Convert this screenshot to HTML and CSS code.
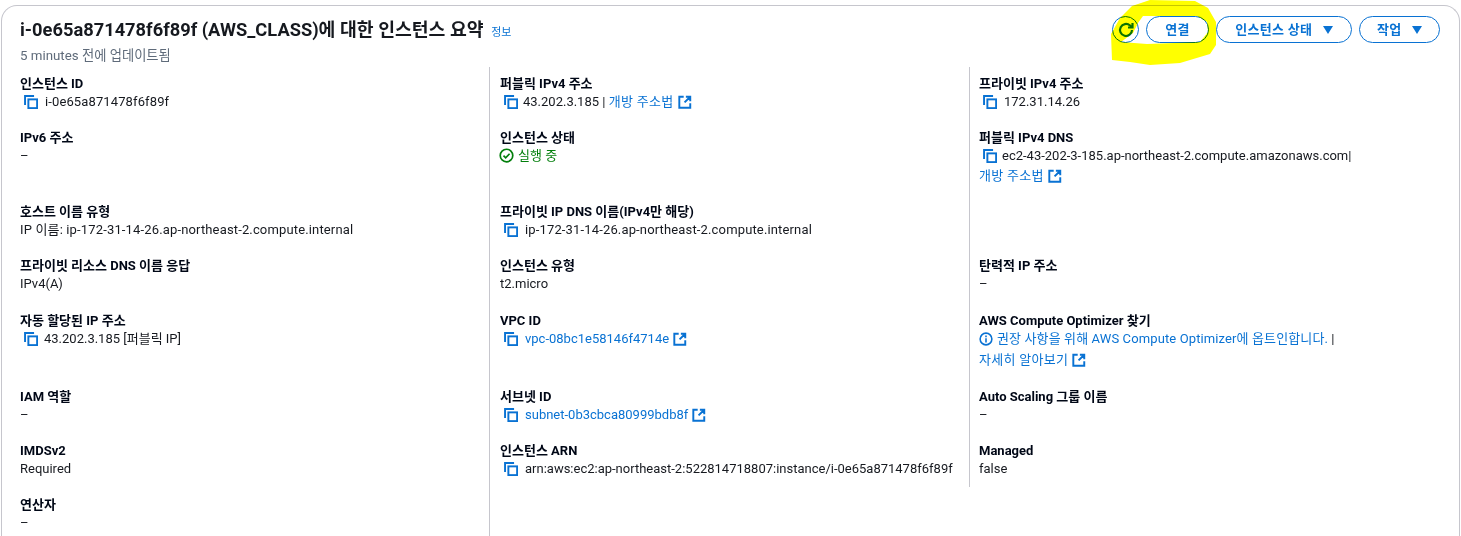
FILE: index.html
```html
<!DOCTYPE html>
<html lang="ko">
<head>
  <meta charset="UTF-8">
  <meta name="viewport" content="width=device-width, initial-scale=1.0">
  <title>인스턴스 요약</title>
  <link rel="stylesheet" href="styles.css">
</head>
<body>
  <!-- Shared icons -->
  <svg class="icon-defs" xmlns="http://www.w3.org/2000/svg">
    <symbol id="copy" viewBox="0 0 16 16">
      <path d="M1.2 11.5V1.2H11.5" fill="none" stroke="currentColor" stroke-width="2.2"></path>
      <rect x="5" y="5" width="10" height="10" fill="none" stroke="currentColor" stroke-width="2.2"></rect>
    </symbol>
    <symbol id="external" viewBox="0 0 16 16">
      <path d="M6.5 2H1.5v12.5H14V9.5M9 2h5v5M14 2L7.5 8.5" fill="none" stroke="currentColor" stroke-width="2.2"></path>
    </symbol>
  </svg>

  <div class="card">
    <header class="card-header">
      <div>
        <h1>i-0e65a871478f6f89f (AWS_CLASS)에 대한 인스턴스 요약 <a class="info-link">정보</a></h1>
        <p class="updated">5 minutes 전에 업데이트됨</p>
      </div>
      <div class="actions">
        <button class="btn btn-icon">
          <svg viewBox="0 0 16 16" class="refresh">
            <path d="M14 8a6 6 0 1 1-2-4.5L14 5" fill="none" stroke="currentColor" stroke-width="2.2"></path>
            <path d="M14.5 1v4.5H10" fill="none" stroke="currentColor" stroke-width="2.2"></path>
          </svg>
        </button>
        <button class="btn btn-connect">연결</button>
        <button class="btn btn-state">인스턴스 상태 <span class="caret"></span></button>
        <button class="btn btn-action">작업 <span class="caret"></span></button>
      </div>
    </header>

    <div class="columns">
      <div class="col">
        <div class="field">
          <div class="label">인스턴스 ID</div>
          <div class="value copy-wide"><svg class="ico-copy"><use href="#copy"></use></svg><span class="stretch-sm">i-0e65a871478f6f89f</span></div>
        </div>
        <div class="field">
          <div class="label">IPv6 주소</div>
          <div class="value">–</div>
        </div>
        <div class="field">
          <div class="label">호스트 이름 유형</div>
          <div class="value stretch">IP 이름: ip-172-31-14-26.ap-northeast-2.compute.internal</div>
        </div>
        <div class="field">
          <div class="label">프라이빗 리소스 DNS 이름 응답</div>
          <div class="value">IPv4(A)</div>
        </div>
        <div class="field">
          <div class="label">자동 할당된 IP 주소</div>
          <div class="value copy-near"><svg class="ico-copy"><use href="#copy"></use></svg>43.202.3.185 [퍼블릭 IP]</div>
        </div>
        <div class="field">
          <div class="label">IAM 역할</div>
          <div class="value">–</div>
        </div>
        <div class="field">
          <div class="label">IMDSv2</div>
          <div class="value">Required</div>
        </div>
        <div class="field">
          <div class="label">연산자</div>
          <div class="value">–</div>
        </div>
      </div>

      <div class="col col-divided">
        <div class="field">
          <div class="label">퍼블릭 IPv4 주소</div>
          <div class="value copy-tight"><svg class="ico-copy"><use href="#copy"></use></svg>43.202.3.185 | <a class="link link-kr">개방 주소법<svg class="ico-ext"><use href="#external"></use></svg></a></div>
        </div>
        <div class="field">
          <div class="label">인스턴스 상태</div>
          <div class="value status">
            <svg viewBox="0 0 16 16" class="ico-status">
              <circle cx="8" cy="8" r="6.7" fill="none" stroke="currentColor" stroke-width="1.8"></circle>
              <path d="M4.8 8.2l2.3 2.3 4.2-4.4" fill="none" stroke="currentColor" stroke-width="1.8"></path>
            </svg>실행 중
          </div>
        </div>
        <div class="field">
          <div class="label">프라이빗 IP DNS 이름(IPv4만 해당)</div>
          <div class="value copy-wide"><svg class="ico-copy"><use href="#copy"></use></svg><span class="stretch">ip-172-31-14-26.ap-northeast-2.compute.internal</span></div>
        </div>
        <div class="field">
          <div class="label">인스턴스 유형</div>
          <div class="value">t2.micro</div>
        </div>
        <div class="field">
          <div class="label">VPC ID</div>
          <div class="value copy-wide"><svg class="ico-copy"><use href="#copy"></use></svg><a class="link">vpc-08bc1e58146f4714e<svg class="ico-ext"><use href="#external"></use></svg></a></div>
        </div>
        <div class="field">
          <div class="label">서브넷 ID</div>
          <div class="value copy-wide"><svg class="ico-copy"><use href="#copy"></use></svg><a class="link">subnet-0b3cbca80999bdb8f<svg class="ico-ext"><use href="#external"></use></svg></a></div>
        </div>
        <div class="field">
          <div class="label">인스턴스 ARN</div>
          <div class="value copy-wide"><svg class="ico-copy"><use href="#copy"></use></svg>arn:aws:ec2:ap-northeast-2:522814718807:instance/i-0e65a871478f6f89f</div>
        </div>
      </div>

      <div class="col col-divided col-last">
        <div class="field">
          <div class="label">프라이빗 IPv4 주소</div>
          <div class="value copy-wide"><svg class="ico-copy"><use href="#copy"></use></svg>172.31.14.26</div>
        </div>
        <div class="field">
          <div class="label">퍼블릭 IPv4 DNS</div>
          <div class="value copy-tight"><svg class="ico-copy"><use href="#copy"></use></svg>ec2-43-202-3-185.ap-northeast-2.compute.amazonaws.com|</div>
          <div class="value second-line"><a class="link link-kr">개방 주소법<svg class="ico-ext"><use href="#external"></use></svg></a></div>
        </div>
        <div class="field"></div>
        <div class="field">
          <div class="label">탄력적 IP 주소</div>
          <div class="value">–</div>
        </div>
        <div class="field">
          <div class="label">AWS Compute Optimizer 찾기</div>
          <div class="value">
            <svg viewBox="0 0 16 16" class="ico-info">
              <circle cx="8" cy="8" r="6.7" fill="none" stroke="currentColor" stroke-width="1.8"></circle>
              <path d="M8 7v5M8 4v2" fill="none" stroke="currentColor" stroke-width="1.8"></path>
            </svg><a class="link stretch-sm">권장 사항을 위해 AWS Compute Optimizer에 옵트인합니다.</a> |
          </div>
          <div class="value second-line second-line-gap"><a class="link link-kr">자세히 알아보기<svg class="ico-ext"><use href="#external"></use></svg></a></div>
        </div>
        <div class="field">
          <div class="label">Auto Scaling 그룹 이름</div>
          <div class="value">–</div>
        </div>
        <div class="field">
          <div class="label">Managed</div>
          <div class="value">false</div>
        </div>
      </div>
    </div>
  </div>

  <!-- Yellow marker scribble on top of the screenshot -->
  <svg class="marker" viewBox="0 0 120 70" xmlns="http://www.w3.org/2000/svg">
    <path fill-rule="evenodd" fill="#ffff00" d="M1 34 L2 60 L20 62 L40 65 L70 63 L100 54 L106 45 L106 22 L98 8 L85 1 L40 0 L22 6 L10 18 Z M11 42 L23 33 L28 23 L33 16 L87 16 L97 22 L98 32 L90 42 L37 44 Z"></path>
  </svg>
</body>
</html>
```

FILE: styles.css
```css
html, body {
  margin: 0;
  height: 536px;
  overflow: hidden;
}
body {
  position: relative;
  font-family: Roboto, "Noto Sans CJK KR", sans-serif;
  font-size: 13px;
  line-height: 18px;
  color: #16191f;
  background: #fff;
}
a {
  color: #0972d3;
}
.icon-defs {
  display: none;
}
.card {
  margin: 5px 1px 0 1px;
  height: 531px;
  box-sizing: border-box;
  border: 1px solid #c6c6cd;
  border-bottom: none;
  border-radius: 16px 16px 0 0;
}
.card-header {
  display: flex;
  justify-content: space-between;
  align-items: flex-start;
  height: 61px;
  padding: 0 19px 0 18px;
}
h1 {
  margin: 12px 0 0;
  font-size: 18.3px;
  line-height: 24px;
  font-weight: 700;
}
.info-link {
  font-size: 11px;
  font-weight: 400;
  margin-left: 3px;
}
.updated {
  margin: 2px 0 0;
  font-size: 13.3px;
  color: #5f6b7a;
}
.actions {
  display: flex;
  gap: 7px;
  margin-top: 10px;
}
.btn {
  height: 27px;
  padding: 0;
  border: 1px solid #0972d3;
  border-radius: 14px;
  background: #fff;
  color: #0972d3;
  font-family: inherit;
  font-size: 13px;
  font-weight: 700;
  line-height: 18px;
  letter-spacing: 0.3px;
}
.btn-icon {
  width: 27px;
  display: flex;
  align-items: center;
  justify-content: center;
}
.refresh {
  width: 16px;
  height: 16px;
}
.btn-connect {
  width: 63px;
}
.btn-state {
  width: 136px;
}
.btn-action {
  width: 81px;
}
.caret {
  display: inline-block;
  margin-left: 7px;
  border-left: 5px solid transparent;
  border-right: 5px solid transparent;
  border-top: 8px solid #0972d3;
}
.columns {
  display: grid;
  grid-template-columns: 487px 480px 1fr;
  align-items: start;
}
.col {
  display: grid;
  grid-template-rows: 54px 74px 54px 55px 76px 54px 54px auto;
  padding: 8px 0 0 18px;
  height: 469px;
  box-sizing: border-box;
}
.col-divided {
  border-left: 1px solid #c6c6cd;
  padding-left: 10px;
}
.col-last {
  grid-template-rows: 54px 74px 54px 55px 76px 54px 45px;
  padding-left: 9px;
  height: 420px;
}
.label {
  font-weight: 700;
  color: #000716;
}
.value {
  color: #16191f;
}
.stretch {
  letter-spacing: 0.15px;
}
.stretch-sm {
  letter-spacing: 0.12px;
}
.link-kr {
  letter-spacing: 0.3px;
}
.second-line {
  line-height: 22px;
}
.second-line-gap {
  margin-top: 1px;
}
.ico-copy {
  width: 14px;
  height: 14px;
  color: #0972d3;
  vertical-align: -3px;
}
.copy-near .ico-copy {
  margin: 0 6px 0 4px;
}
.copy-tight .ico-copy {
  margin: 0 5px 0 4px;
}
.copy-wide .ico-copy {
  margin: 0 7px 0 4px;
}
.ico-ext {
  width: 14px;
  height: 14px;
  margin-left: 4px;
  color: #0972d3;
  vertical-align: -3px;
}
.status {
  color: #037f0c;
}
.ico-status {
  width: 15px;
  height: 15px;
  margin-right: 4px;
  margin-left: -1px;
  vertical-align: -3px;
}
.ico-info {
  width: 14px;
  height: 14px;
  margin-right: 4px;
  color: #0972d3;
  vertical-align: -3px;
}
.marker {
  position: absolute;
  left: 1110px;
  top: 0;
  width: 120px;
  height: 70px;
  mix-blend-mode: multiply;
}
```
